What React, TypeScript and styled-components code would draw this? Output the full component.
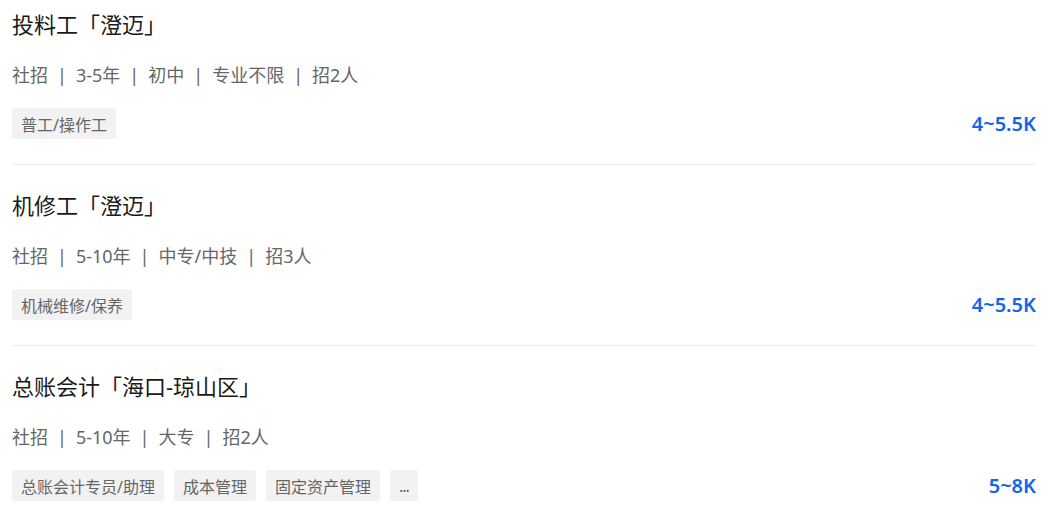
import styled, { createGlobalStyle } from "styled-components";

const GlobalStyle = createGlobalStyle`
  body {
    margin: 0;
    background: #fff;
    font-family: "Noto Sans", "Noto Sans CJK SC", sans-serif;
  }
`;

const List = styled.ul`
  list-style: none;
  margin: 0;
  padding: 0 12px;
`;

const Item = styled.li`
  padding: 25px 0;
  border-bottom: 1px solid #eeeeee;

  &:first-child {
    padding-top: 9px;
  }
`;

const Title = styled.h3`
  margin: 0;
  height: 30px;
  font-size: 22px;
  line-height: 30px;
  font-weight: 400;
  color: #1a1a1a;
`;

const Meta = styled.div`
  margin-top: 24px;
  height: 24px;
  display: flex;
  align-items: center;
  font-size: 18px;
  line-height: 24px;
  color: #666;
`;

const Sep = styled.span`
  margin: 0 9px;
`;

const Bottom = styled.div`
  margin-top: 21px;
  height: 31px;
  display: flex;
  align-items: center;
  justify-content: space-between;
`;

const Tags = styled.div`
  display: flex;
  gap: 10px;
`;

const Tag = styled.span<{ $more?: boolean }>`
  height: 31px;
  padding: 0 9px;
  display: inline-flex;
  align-items: center;
  background: #f2f2f2;
  border-radius: 2px;
  font-size: 16px;
  color: #666;
  letter-spacing: ${({ $more }) => ($more ? "-1px" : "0")};
`;

const Salary = styled.span`
  font-size: 20px;
  line-height: 24px;
  font-weight: 600;
  color: #1565e8;
`;

type Job = {
  title: string;
  meta: string[];
  tags: string[];
  salary: string;
};

const jobs: Job[] = [
  {
    title: "投料工「澄迈」",
    meta: ["社招", "3-5年", "初中", "专业不限", "招2人"],
    tags: ["普工/操作工"],
    salary: "4~5.5K",
  },
  {
    title: "机修工「澄迈」",
    meta: ["社招", "5-10年", "中专/中技", "招3人"],
    tags: ["机械维修/保养"],
    salary: "4~5.5K",
  },
  {
    title: "总账会计「海口-琼山区」",
    meta: ["社招", "5-10年", "大专", "招2人"],
    tags: ["总账会计专员/助理", "成本管理", "固定资产管理", "..."],
    salary: "5~8K",
  },
];

export default function App() {
  return (
    <>
      <GlobalStyle />
      <List>
        {jobs.map((job) => (
          <Item key={job.title}>
            <Title>{job.title}</Title>
            <Meta>
              {job.meta.map((m, i) => (
                <span key={m}>
                  {i > 0 && <Sep>|</Sep>}
                  {m}
                </span>
              ))}
            </Meta>
            <Bottom>
              <Tags>
                {job.tags.map((t) => (
                  <Tag key={t} $more={t === "..."}>
                    {t}
                  </Tag>
                ))}
              </Tags>
              <Salary>{job.salary}</Salary>
            </Bottom>
          </Item>
        ))}
      </List>
    </>
  );
}
